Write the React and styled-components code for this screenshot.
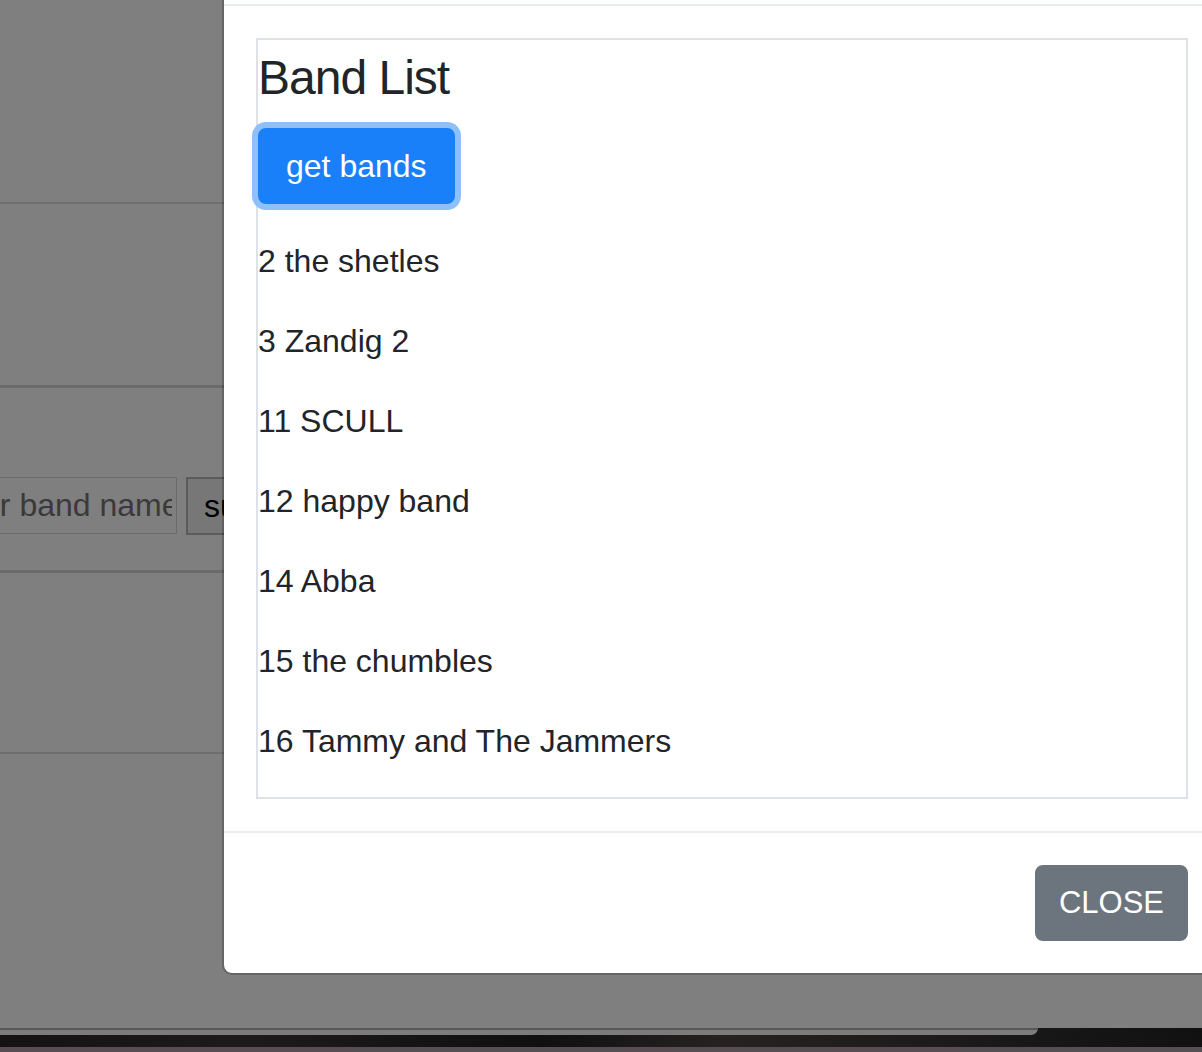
import styled, { createGlobalStyle } from "styled-components";

const GlobalStyle = createGlobalStyle`
  html, body {
    margin: 0;
    padding: 0;
    overflow: hidden;
    background: #111;
  }
  * {
    box-sizing: border-box;
  }
`;

const Screen = styled.div`
  width: 1202px;
  height: 1052px;
  display: flex;
  flex-direction: column;
  overflow: hidden;
  font-family: "Liberation Sans", Arial, sans-serif;
`;

const Viewport = styled.div`
  position: relative;
  height: 1028px;
  flex: none;
  overflow: hidden;
  background: #ffffff;
`;

const Page = styled.div`
  display: flex;
  flex-direction: column;
`;

const Section = styled.div`
  height: ${({ height }) => height}px;
  border-bottom: ${({ line }) => line}px solid ${({ tone }) => tone || "#dcdcdc"};
  padding-top: ${({ pad }) => pad || 0}px;
`;

const FormRow = styled.div`
  display: flex;
  gap: 9px;
  margin-left: -71px;
`;

const BandInput = styled.input`
  width: 248px;
  height: 57px;
  padding: 0 4px 0 4px;
  border: 1px solid #d4d4d4;
  font-family: "Liberation Sans", Arial, sans-serif;
  font-size: 32px;
  color: #222;
  background: #fff;
  outline: none;

  &::placeholder {
    color: #757575;
  }
`;

const SubmitButton = styled.button`
  height: 58px;
  padding: 0 16px;
  border: 2px solid #b6b6b6;
  background: #efefef;
  color: #000;
  font-family: "Liberation Sans", Arial, sans-serif;
  font-size: 32px;
`;

const Backdrop = styled.div`
  position: absolute;
  inset: 0;
  background: rgba(0, 0, 0, 0.5);
`;

const Modal = styled.div`
  position: absolute;
  left: 222px;
  top: -92px;
  width: 1000px;
  display: flex;
  flex-direction: column;
  background: #fff;
  background-clip: padding-box;
  border: 2px solid rgba(0, 0, 0, 0.2);
  border-radius: 10px;
  color: #212529;
`;

const ModalHeader = styled.div`
  height: 96px;
  border-bottom: 2px solid #e9ecef;
`;

const ModalBody = styled.div`
  padding: 32px;
`;

const ListBox = styled.div`
  border: 2px solid #dee2e6;
  padding-top: 9px;
`;

const Title = styled.h4`
  margin: 0 0 21px;
  font-size: 48px;
  font-weight: 400;
  line-height: 1.2;
  letter-spacing: -1px;
`;

const ButtonRow = styled.div`
  margin-bottom: 33px;
`;

const Button = styled.button`
  display: inline-block;
  height: 76px;
  padding: 0 ${({ pad }) => pad}px;
  border: 2px solid ${({ bg }) => bg};
  border-radius: 8px;
  background: ${({ bg }) => bg};
  color: #fff;
  font-family: "Liberation Sans", Arial, sans-serif;
  font-size: ${({ size }) => size}px;
  line-height: 48px;
  box-shadow: ${({ focused }) => (focused ? "0 0 0 6px #8ec0fb" : "none")};
  text-transform: ${({ upper }) => (upper ? "uppercase" : "none")};
`;

const BandItem = styled.p`
  margin: 0 0 32px;
  font-size: 32px;
  line-height: 48px;
`;

const ModalFooter = styled.div`
  display: flex;
  justify-content: flex-end;
  padding: 32px;
  border-top: 2px solid #e9ecef;
`;

const Desktop = styled.div`
  flex: 1;
  display: flex;
  flex-direction: column;
  background: linear-gradient(90deg, #141212, #1d1a1b 20%, #101010 45%, #262222 60%, #111 100%);
`;

const WindowTail = styled.div`
  width: 1038px;
  height: 7px;
  background: #7c7c7c;
  border-top: 2px solid #575757;
  border-bottom-right-radius: 8px;
`;

const DesktopEdge = styled.div`
  margin-top: auto;
  height: 5px;
  background: #574e53;
`;

const bands = [
  "2 the shetles",
  "3 Zandig 2",
  "11 SCULL",
  "12 happy band",
  "14 Abba",
  "15 the chumbles",
  "16 Tammy and The Jammers",
];

export default function App() {
  return (
    <>
      <GlobalStyle />
      <Screen>
        <Viewport>
          <Page>
            <Section height={204} line={2} />
            <Section height={184} line={3} tone="#d6d6d6" />
            <Section height={185} line={3} tone="#d6d6d6" pad={89}>
              <FormRow>
                <BandInput placeholder="Enter band name" readOnly />
                <SubmitButton>submit</SubmitButton>
              </FormRow>
            </Section>
            <Section height={181} line={2} />
          </Page>
          <Backdrop />
          <Modal>
            <ModalHeader />
            <ModalBody>
              <ListBox>
                <Title>Band List</Title>
                <ButtonRow>
                  <Button bg="#1a80fa" pad={26} size={32} focused>
                    get bands
                  </Button>
                </ButtonRow>
                {bands.map((band) => (
                  <BandItem key={band}>{band}</BandItem>
                ))}
              </ListBox>
            </ModalBody>
            <ModalFooter>
              <Button bg="#6c757d" pad={22} size={31} upper>
                Close
              </Button>
            </ModalFooter>
          </Modal>
        </Viewport>
        <Desktop>
          <WindowTail />
          <DesktopEdge />
        </Desktop>
      </Screen>
    </>
  );
}
